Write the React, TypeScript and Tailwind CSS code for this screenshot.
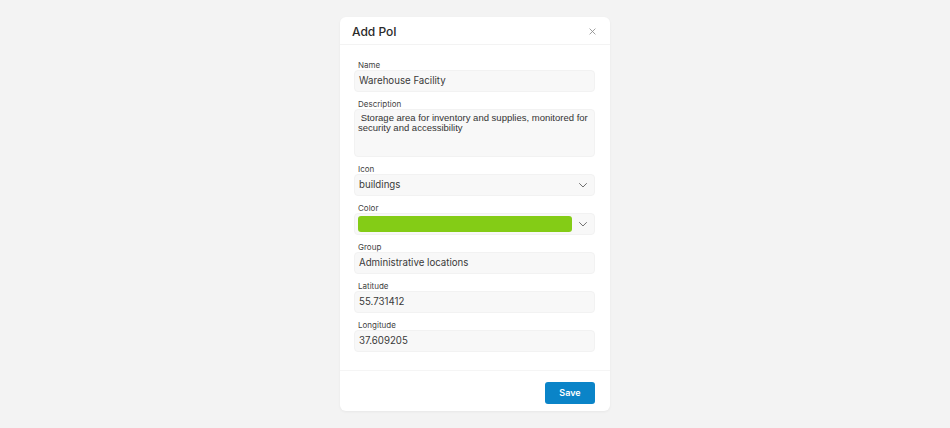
import React from "react";

function Chevron() {
  return (
    <svg width="12" height="12" viewBox="0 0 24 24" fill="none" stroke="#707070" strokeWidth="2" strokeLinecap="round" strokeLinejoin="round">
      <path d="M5 9l7 7 7-7" />
    </svg>
  );
}

function Field({ label, children }: { label: string; children: React.ReactNode }) {
  return (
    <div className="flex flex-col">
      <div className="h-[10px] pl-[4px] text-[8px] leading-[10px] text-[#3f3f3f]">{label}</div>
      {children}
    </div>
  );
}

function Input({ value }: { value: string }) {
  return (
    <div className="h-[22px] rounded-[4px] bg-[#f8f8f8] border border-[#f2f2f2] flex items-center pl-[4px] text-[9.7px] text-[#3a3a3a]">
      {value}
    </div>
  );
}

export default function App() {
  return (
    <div className="min-h-[428px] w-full bg-[#f3f3f3] flex justify-center pt-[17px]" style={{ fontFamily: "Inter, 'Noto Sans', sans-serif" }}>
      <div className="w-[270px] h-[394px] bg-white rounded-[6px] shadow-[0_1px_3px_rgba(0,0,0,0.05)] flex flex-col">
        <div className="h-[28px] flex items-center justify-between pt-[2px] pl-[12px] pr-[13px] border-b border-[#f3f3f3]">
          <span className="text-[12px] font-medium text-[#2a2a2a]">Add PoI</span>
          <svg width="9" height="9" viewBox="0 0 24 24" fill="none" stroke="#8a8a8a" strokeWidth="2.2" strokeLinecap="round">
            <path d="M5 5l14 14M19 5L5 19" />
          </svg>
        </div>
        <div className="flex flex-col gap-[7px] pt-[15px] pb-[18px] pl-[14px] pr-[15px] border-b border-[#f5f5f5]">
          <Field label="Name">
            <Input value="Warehouse Facility" />
          </Field>
          <Field label="Description">
            <div
              className="h-[48px] rounded-[4px] bg-[#f8f8f8] border border-[#f2f2f2] pl-[3px] pr-[3px] pt-[3px] text-[9.5px] leading-[10px] text-[#333333]"
              style={{ fontFamily: "'Liberation Sans', Arial, sans-serif" }}
            >
              {"\u00a0Storage area for inventory and supplies, monitored for security and accessibility"}
            </div>
          </Field>
          <Field label="Icon">
            <div className="h-[22px] rounded-[4px] bg-[#f8f8f8] border border-[#f2f2f2] flex items-center justify-between pl-[4px] pr-[5px] text-[9.7px] text-[#3a3a3a]">
              <span>buildings</span>
              <Chevron />
            </div>
          </Field>
          <Field label="Color">
            <div className="h-[22px] rounded-[4px] bg-[#f8f8f8] border border-[#f2f2f2] flex items-center pl-[3px] pr-[5px] gap-[5px]">
              <div className="h-[16px] w-[215px] rounded-[3px] bg-[#84cc16]" />
              <Chevron />
            </div>
          </Field>
          <Field label="Group">
            <Input value="Administrative locations" />
          </Field>
          <Field label="Latitude">
            <Input value="55.731412" />
          </Field>
          <Field label="Longitude">
            <Input value="37.609205" />
          </Field>
        </div>
        <div className="flex justify-end pt-[11px] pr-[15px]">
          <button className="h-[22px] w-[50px] rounded-[3px] bg-[#0a84c8] text-white text-[9px] font-semibold">Save</button>
        </div>
      </div>
    </div>
  );
}
